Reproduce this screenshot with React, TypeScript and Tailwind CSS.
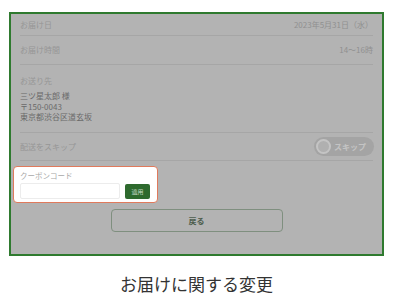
import React from 'react'

const font = { fontFamily: '"Noto Sans CJK JP", "Noto Sans", sans-serif' }

function Row({ label, value, className }: { label: string; value?: string; className: string }) {
  return (
    <div className={`flex items-center justify-between border-b border-[#a6a6a6] ${className}`}>
      <span className="text-[8px] text-[#969696]">{label}</span>
      {value && <span className="text-[8px] text-[#909090]">{value}</span>}
    </div>
  )
}

export default function App() {
  return (
    <div className="w-[404px] h-[303px] bg-white pt-[12px]" style={font}>
      <div className="ml-[9px] w-[375px]">
        <div className="h-[244px] border-2 border-[#2f7a2f] bg-[#b3b3b3] px-[9px]">
          <Row label="お届け日" value="2023年5月31日（水）" className="h-[22px]" />
          <Row label="お届け時間" value="14〜16時" className="h-[29px]" />

          <div className="h-[68px] border-b border-[#a6a6a6] pt-[10px]">
            <div className="text-[8px] leading-[12px] text-[#969696]">お送り先</div>
            <div className="mt-[4px] text-[8px] leading-[10.5px] text-[#6a6a6a]">
              <div>三ツ星太郎 様</div>
              <div>〒150-0043</div>
              <div>東京都渋谷区道玄坂</div>
            </div>
          </div>

          <div className="flex h-[28px] items-center justify-between border-b border-[#a6a6a6]">
            <span className="text-[8px] text-[#969696]">配送をスキップ</span>
            <div className="relative mr-[-1px] flex h-[19px] w-[60px] items-center rounded-full bg-[#a4a4a4]">
              <div className="ml-[2px] h-[15px] w-[15px] rounded-full border-2 border-[#c4c4c4] bg-[#b0b0b0]" />
              <span className="ml-[3px] text-[8px] font-bold text-[#c4c4c4]">スキップ</span>
            </div>
          </div>

          <div className="-ml-[7px] mt-[5px] w-[145px] rounded-[4px] border-[1.5px] border-[#e07a5c] bg-white px-[6px] pt-[3px] pb-[3px]">
            <div className="text-[7.5px] leading-[12px] text-[#a8a8a8]">クーポンコード</div>
            <div className="mt-[1px] flex items-center gap-[5px]">
              <div className="h-[16px] w-[100px] rounded-[2px] border border-[#ececec]" />
              <div className="flex h-[15px] w-[25px] items-center justify-center rounded-[2px] bg-[#2e6a2e] text-[6px] text-[#c8dcc8]">
                適用
              </div>
            </div>
          </div>

          <div className="mt-[6px] flex justify-center">
            <div className="flex h-[23px] w-[172px] items-center justify-center rounded-[4px] border-[1.5px] border-[#7f8f7f] text-[8px] font-bold text-[#4d5d4d]">
              戻る
            </div>
          </div>
        </div>

        <div className="mt-[17px] text-center text-[17px] leading-[22px] text-[#333]">
          お届けに関する変更
        </div>
      </div>
    </div>
  )
}
